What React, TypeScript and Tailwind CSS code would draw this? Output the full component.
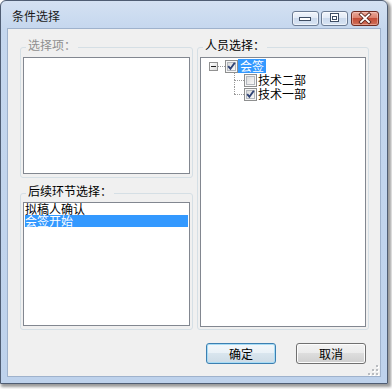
import React from "react";

function CheckBox({ checked }: { checked: boolean }) {
  return (
    <svg width="13" height="13" viewBox="0 0 13 13" className="shrink-0 block">
      <defs>
        <linearGradient id="cbg" x1="0" y1="0" x2="1" y2="1">
          <stop offset="0" stopColor="#d9d9d9" />
          <stop offset="1" stopColor="#fbfbfb" />
        </linearGradient>
      </defs>
      <rect x="0.5" y="0.5" width="12" height="12" fill="#f6f6f6" stroke="#8e8f8f" />
      <rect x="2.5" y="2.5" width="8" height="8" fill="url(#cbg)" stroke="#b4b8be" />
      {checked && (
        <path d="M3.2 6.2 L5.4 8.8 L9.8 2.8" fill="none" stroke="#2f4375" strokeWidth="1.9" />
      )}
    </svg>
  );
}

function MinIcon() {
  return (
    <svg width="25" height="13" viewBox="0 0 25 13" className="block">
      <rect x="6.5" y="5.5" width="11" height="3" fill="#ffffff" stroke="#3f4e64" />
    </svg>
  );
}

function MaxIcon() {
  return (
    <svg width="25" height="13" viewBox="0 0 25 13" className="block">
      <rect x="8.5" y="1.5" width="8" height="8" fill="#ffffff" stroke="#3f4e64" />
      <rect x="10.5" y="4.5" width="4" height="3" fill="#ffffff" stroke="#3f4e64" />
    </svg>
  );
}

function CloseIcon() {
  return (
    <svg width="26" height="13" viewBox="0 0 26 13" className="block">
      <path d="M9 2.5 L17 10 M17 2.5 L9 10" stroke="#5b241b" strokeWidth="3.6" strokeLinecap="square" />
      <path d="M9 2.5 L17 10 M17 2.5 L9 10" stroke="#ffffff" strokeWidth="1.8" strokeLinecap="square" />
    </svg>
  );
}

function Grip() {
  return (
    <svg width="11" height="11" viewBox="0 0 11 11" className="block">
      {[
        [8, 0],
        [4, 4],
        [8, 4],
        [0, 8],
        [4, 8],
        [8, 8],
      ].map(([x, y], i) => (
        <g key={i}>
          <rect x={x + 1} y={y + 1} width="2" height="2" fill="#ffffff" />
          <rect x={x} y={y} width="2" height="2" fill="#b9bcc0" />
        </g>
      ))}
    </svg>
  );
}

export default function App() {
  return (
    <div className="w-[392px] h-[389px] bg-white overflow-hidden font-['Noto_Sans_CJK_SC','Noto_Sans',sans-serif] text-[12px] leading-[12px] text-black">
      <div className="w-[388px] h-[384px] rounded-t-[6px] border border-[#4f5d73] bg-[linear-gradient(180deg,#d4e1f2_0px,#c5d7ee_28px,#bed2ec_100%)] shadow-[2px_2px_3px_1px_rgba(0,0,0,0.4)] px-[6px] pb-[6px] flex flex-col">
        {/* title bar */}
        <div className="h-[27px] flex items-start justify-between">
          <span className="pl-[5px] pt-[8px] leading-[14px] text-[12px] text-[#1a1a1a]">条件选择</span>
          <div className="flex items-start mt-[10px] mr-[2px]">
            <div className="w-[27px] h-[15px] border border-[#6b7b93] rounded-[3px] bg-[linear-gradient(180deg,#f1f5fb_0%,#e0e9f5_50%,#cbd9ec_50%,#d9e5f4_100%)] shadow-[inset_0_0_0_1px_rgba(255,255,255,0.55)]">
              <MinIcon />
            </div>
            <div className="w-[27px] h-[15px] ml-[2px] border border-[#6b7b93] rounded-[3px] bg-[linear-gradient(180deg,#f1f5fb_0%,#e0e9f5_50%,#cbd9ec_50%,#d9e5f4_100%)] shadow-[inset_0_0_0_1px_rgba(255,255,255,0.55)]">
              <MaxIcon />
            </div>
            <div className="w-[28px] h-[15px] ml-[3px] border border-[#6e2c22] rounded-[3px] bg-[linear-gradient(180deg,#eaa99a_0%,#d97c68_50%,#c44d37_50%,#d0705a_100%)] shadow-[inset_0_0_0_1px_rgba(255,220,210,0.45)]">
              <CloseIcon />
            </div>
          </div>
        </div>

        {/* client area */}
        <div className="flex-1 bg-[#f0f0f0] border border-[#9fb2cc] relative flex flex-col pt-[10px]">
          <div className="flex h-[291px] pl-[12px] gap-[4px]">
            <div className="flex flex-col w-[173px] gap-[7px]">
              <fieldset className="h-[139px] min-w-0 border border-[#d5dfe5] rounded-[3px] px-[2px] pt-[2px] pb-[3px]">
                <legend className="ml-[3px] px-[2px] pb-[4px] leading-[12px] text-[#8f8f8f]">选择项：</legend>
                <div className="h-[117px] bg-white border border-[#828790]" />
              </fieldset>
              <fieldset className="h-[145px] min-w-0 border border-[#d5dfe5] rounded-[3px] px-[2px] pt-[1px] pb-[3px]">
                <legend className="ml-[3px] px-[2px] pb-[4px] leading-[12px]">后续环节选择：</legend>
                <div className="h-[124px] bg-white border border-[#828790] px-[1px] flex flex-col">
                  <div className="h-[12px] leading-[12px] whitespace-nowrap">拟稿人确认</div>
                  <div className="h-[12px] leading-[12px] whitespace-nowrap bg-[#3399ff] text-white">会签开始</div>
                </div>
              </fieldset>
            </div>
            <fieldset className="w-[172px] h-[291px] min-w-0 border border-[#d5dfe5] rounded-[3px] px-[2px] pt-[2px] pb-[3px]">
              <legend className="ml-[3px] px-[2px] pb-[4px] leading-[12px]">人员选择：</legend>
              <div className="h-[270px] bg-white border border-[#828790] pt-[1px] flex flex-col">
                <div className="flex h-[14px] items-center pl-[8px]">
                  <div className="w-[9px] h-[9px] border border-[#919191] bg-[linear-gradient(135deg,#ffffff,#dcdcdc)] flex items-center justify-center">
                    <div className="w-[5px] h-[1px] bg-[#1e1e1e]" />
                  </div>
                  <div className="w-[7px] border-t border-dotted border-[#9a9a9a]" />
                  <CheckBox checked />
                  <span className="px-[2px] h-[14px] leading-[14px] bg-[#3399ff] text-white whitespace-nowrap">会签</span>
                </div>
                <div className="flex h-[14px] items-center">
                  <div className="w-[33px] shrink-0" />
                  <div className="w-[10px] self-stretch flex flex-col">
                    <div className="h-[7px] border-l border-dotted border-[#9a9a9a]" />
                    <div className="flex-1 border-l border-t border-dotted border-[#9a9a9a]" />
                  </div>
                  <CheckBox checked={false} />
                  <span className="px-[1px] leading-[14px] whitespace-nowrap">技术二部</span>
                </div>
                <div className="flex h-[14px] items-center">
                  <div className="w-[33px] shrink-0" />
                  <div className="w-[10px] self-stretch flex flex-col">
                    <div className="h-[7px] border-l border-dotted border-[#9a9a9a]" />
                    <div className="flex-1 border-t border-dotted border-[#9a9a9a]" />
                  </div>
                  <CheckBox checked />
                  <span className="px-[1px] leading-[14px] whitespace-nowrap">技术一部</span>
                </div>
              </div>
            </fieldset>
          </div>

          <div className="flex justify-end gap-[20px] pr-[14px] mt-[13px]">
            <button className="w-[70px] h-[21px] rounded-[3px] border border-[#3c7fb1] bg-[linear-gradient(180deg,#f3f7fa_0%,#e9f1f7_50%,#d9e5ee_50%,#cddbe6_100%)] shadow-[inset_0_0_0_1px_#a8dcf5] text-[12px] leading-[12px] text-black">
              确定
            </button>
            <button className="w-[70px] h-[21px] rounded-[3px] border border-[#707070] bg-[linear-gradient(180deg,#f2f2f2_0%,#ebebeb_50%,#dddddd_50%,#cfcfcf_100%)] shadow-[inset_0_0_0_1px_#fcfcfc] text-[12px] leading-[12px] text-black">
              取消
            </button>
          </div>

          <div className="absolute right-[1px] bottom-[0px]">
            <Grip />
          </div>
        </div>
      </div>
    </div>
  );
}
